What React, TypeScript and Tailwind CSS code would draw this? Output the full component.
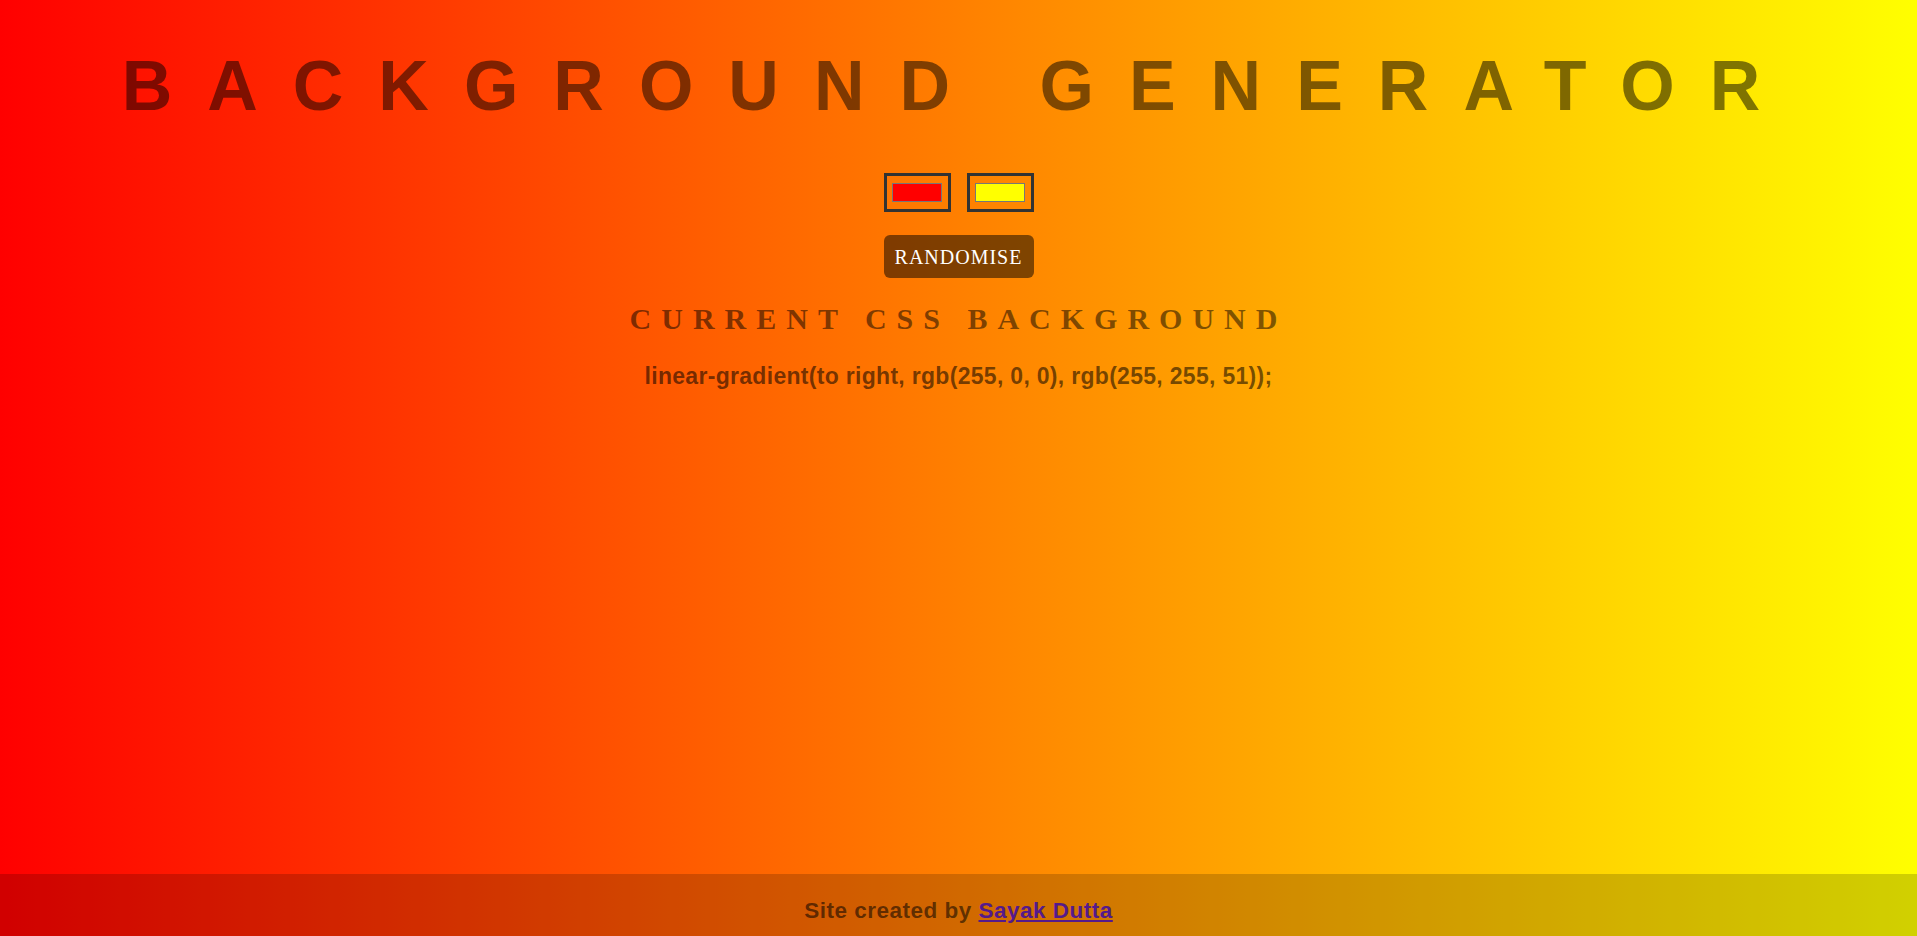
import React from "react";

export default function App() {
  return (
    <div className="h-screen flex flex-col bg-[linear-gradient(to_right,rgb(255,0,0),rgb(255,255,0))] font-['Liberation_Sans',Arial,sans-serif]">
      <main className="flex-1 flex flex-col items-center">
        {/* Title */}
        <h1 className="pt-[51px] text-[70px] leading-[70px] font-bold tracking-[35px] text-black/50 whitespace-nowrap">
          BACKGROUND GENERATOR
        </h1>

        {/* Colour pickers */}
        <div className="mt-[52px] flex gap-4">
          <ColorBox color="#ff0000" />
          <ColorBox color="#ffff00" />
        </div>

        <button className="mt-[23px] w-[150px] h-[43px] rounded-md bg-black/50 text-white font-['Liberation_Serif','Times_New_Roman',serif] text-[20px] tracking-[1px]">
          RANDOMISE
        </button>

        <h3 className="mt-[26px] font-['Liberation_Serif','Times_New_Roman',serif] font-bold text-[30px] leading-[30px] tracking-[10px] text-black/50 whitespace-nowrap">
          CURRENT CSS BACKGROUND
        </h3>

        <p className="mt-[31px] text-[23px] leading-[23px] font-bold tracking-[0.3px] text-black/55 whitespace-nowrap">
          linear-gradient(to right, rgb(255, 0, 0), rgb(255, 255, 51));
        </p>
      </main>

      <footer className="h-[62px] bg-black/[0.18] flex justify-center pt-[26px]">
        <p className="text-[22.5px] leading-[22.5px] font-bold tracking-[0.5px] text-black/55">
          Site created by{" "}
          <a href="#" className="text-[#551a8b] underline">
            Sayak Dutta
          </a>
        </p>
      </footer>
    </div>
  );
}

function ColorBox({ color }: { color: string }) {
  return (
    <div className="w-[67px] h-[39px] border-[3px] border-[#333] flex items-center justify-center">
      <div className="w-[50px] h-[19px] border border-[#777]" style={{ backgroundColor: color }} />
    </div>
  );
}
